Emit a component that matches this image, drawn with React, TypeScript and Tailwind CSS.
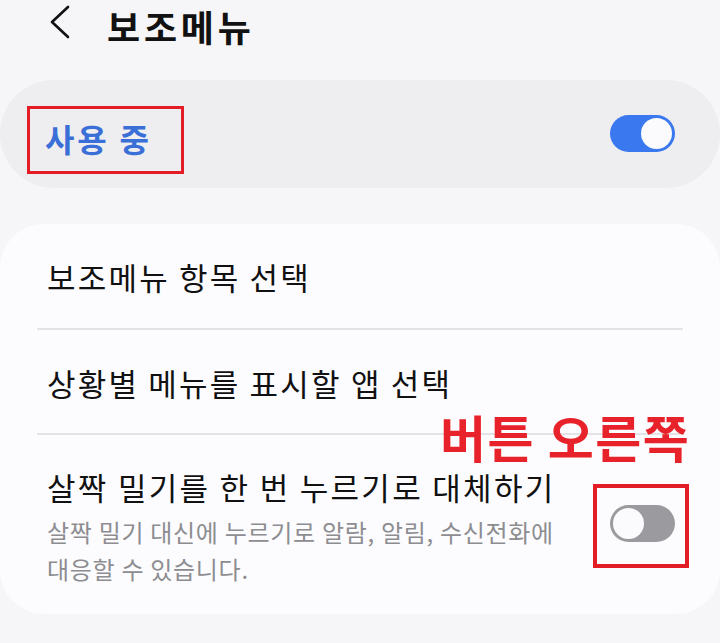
const font = "font-['Noto_Sans_CJK_KR','Noto_Sans',sans-serif]";

const Toggle = ({ on }: { on: boolean }) => (
  <div
    className={`flex h-[37px] w-[65px] items-center rounded-full ${
      on ? "bg-[#3a78ef] justify-end pr-[3px]" : "bg-[#9b9b9f] justify-start pl-[3px]"
    }`}
  >
    <div className="h-[31px] w-[31px] rounded-full bg-[#fbfbfd]" />
  </div>
);

const App = () => {
  return (
    <div className={`relative h-[643px] w-[720px] overflow-hidden bg-[#f6f6f8] ${font}`}>
      {/* 헤더 */}
      <div className="flex h-[80px] items-start pt-[5px]">
        <svg className="ml-[49px]" width="22" height="34" viewBox="0 0 22 34" fill="none">
          <polyline
            points="19,2 3,17 19,32"
            stroke="#111"
            strokeWidth="2.6"
            strokeLinecap="round"
            strokeLinejoin="round"
          />
        </svg>
        <div className="ml-[36px] mt-[3px] text-[36px] font-bold leading-[36px] tracking-[3.8px] text-[#111]">
          보조메뉴
        </div>
      </div>

      {/* 사용 중 */}
      <div className="flex h-[108px] items-start justify-between rounded-[54px] bg-[#eeeef0] pl-[27px] pr-[45px] pt-[26px]">
        <div className="flex h-[68px] w-[157px] items-center border-[3px] border-[#e31d25] pb-[4px] pl-[15px]">
          <span className="text-[32px] font-bold leading-[32px] tracking-[2.8px] text-[#3b6fd8]">사용 중</span>
        </div>
        <div className="mt-[9px]">
          <Toggle on />
        </div>
      </div>

      {/* 목록 */}
      <div className="mt-[36px] rounded-[44px] bg-[#fcfcfe] px-[37px]">
        <div className="flex h-[106px] items-center border-b-2 border-[#e3e3e5] pl-[10px] pt-[2px]">
          <span className="text-[31px] leading-[40px] tracking-[2.2px] text-[#111]">보조메뉴 항목 선택</span>
        </div>
        <div className="flex h-[105px] items-center border-b-2 border-[#e3e3e5] pl-[10px] pt-[2px]">
          <span className="text-[31px] leading-[40px] tracking-[2.2px] text-[#111]">
            상황별 메뉴를 표시할 앱 선택
          </span>
        </div>
        <div className="flex items-start justify-between">
          <div className="pb-[27px] pl-[10px] pt-[32px]">
            <div className="whitespace-nowrap text-[31px] leading-[40px] tracking-[2.3px] text-[#111]">
              살짝 밀기를 한 번 누르기로 대체하기
            </div>
            <div className="mt-[6px] whitespace-nowrap text-[24px] leading-[37px] tracking-[0.7px] text-[#8d8d91]">
              살짝 밀기 대신에 누르기로 알람, 알림, 수신전화에
              <br />
              대응할 수 있습니다.
            </div>
          </div>
          <div className="-mr-[6px] mt-[49px] flex h-[84px] w-[96px] items-start border-4 border-[#e31d25] pl-[13px] pt-[17px]">
            <Toggle on={false} />
          </div>
        </div>
      </div>

      {/* 주석 */}
      <div className="absolute left-[440px] top-[411px] whitespace-nowrap text-[50px] font-bold leading-[50px] tracking-[1.5px] text-[#e8222a]">
        버튼 오른쪽
      </div>
    </div>
  );
};

export default App;
